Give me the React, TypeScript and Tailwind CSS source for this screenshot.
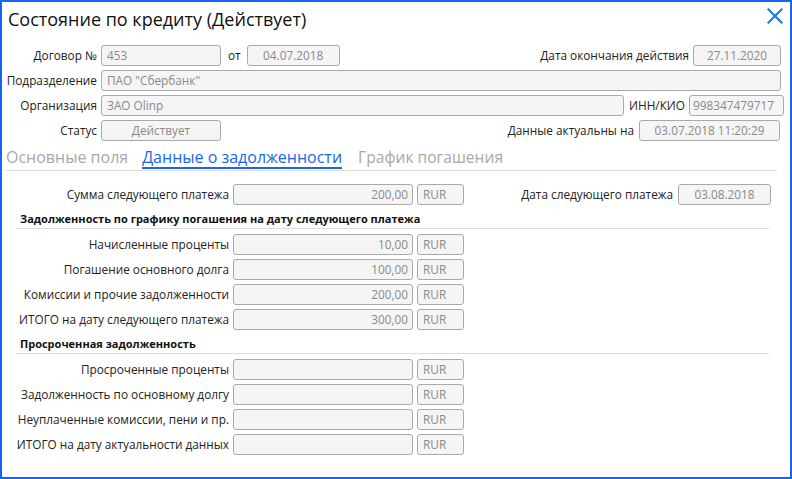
import React from 'react';

const font = { fontFamily: '"Open Sans", "Noto Sans", sans-serif' };

const Field: React.FC<{ value?: string; className?: string; align?: 'left' | 'center' | 'right' }> = ({
  value = '',
  className = '',
  align = 'left',
}) => {
  const alignCls = align === 'center' ? 'justify-center' : align === 'right' ? 'justify-end pr-[4px]' : 'justify-start pl-[5px]';
  return (
    <div
      className={`h-[21px] flex items-center rounded-[3px] border border-[#a9a9a9] bg-[#f5f5f5] text-[11.8px] text-[#8a8a8a] whitespace-nowrap overflow-hidden ${alignCls} ${className}`}
    >
      {value}
    </div>
  );
};

const Label: React.FC<{ children: React.ReactNode; className?: string }> = ({ children, className = '' }) => (
  <div className={`text-[11.8px] text-[#222] text-right whitespace-nowrap ${className}`}>{children}</div>
);

const AmountRow: React.FC<{ label: string; value?: string }> = ({ label, value }) => (
  <div className="flex items-center h-[21px]">
    <Label className="w-[227px]">{label}</Label>
    <Field value={value} align="right" className="ml-[4px] w-[180px]" />
    <Field value="RUR" className="ml-[4px] w-[47px]" />
  </div>
);

const SectionHeader: React.FC<{ title: string }> = ({ title }) => (
  <div className="mt-[7px] ml-[14px] w-[753px] border-b border-[#dcdcdc] pl-[4px] pb-[2px]">
    <div className="text-[11px] leading-[14px] font-bold text-[#111]">{title}</div>
  </div>
);

const App: React.FC = () => {
  const overdue = [
    'Просроченные проценты',
    'Задолженность по основному долгу',
    'Неуплаченные комиссии, пени и пр.',
    'ИТОГО на дату актуальности данных',
  ];

  return (
    <div style={font} className="w-[792px] h-[479px] bg-white border-2 border-[#1466f0] flex flex-col">
      {/* Title */}
      <div className="flex items-start justify-between pl-[6px] pr-[7px] pt-[5px] mb-[14px]">
        <h1 className="text-[18px] leading-[24px] text-[#111]">Состояние по кредиту (Действует)</h1>
        <svg width="16" height="16" viewBox="0 0 16 16" className="mt-[1px]">
          <path d="M1.5 1.5 L14.5 14.5 M14.5 1.5 L1.5 14.5" stroke="#1f7ae6" strokeWidth="2.2" strokeLinecap="square" />
        </svg>
      </div>

      {/* Header fields */}
      <div className="flex flex-col gap-[4px]">
        <div className="flex items-center h-[21px] pr-[9px]">
          <Label className="w-[95px]">Договор №</Label>
          <Field value="453" className="ml-[4px] w-[120px]" />
          <Label className="ml-[7px]">от</Label>
          <Field value="04.07.2018" align="center" className="ml-[6px] w-[93px]" />
          <div className="flex-1" />
          <Label>Дата окончания действия</Label>
          <Field value="27.11.2020" align="center" className="ml-[4px] w-[88px]" />
        </div>
        <div className="flex items-center h-[21px] pr-[9px]">
          <Label className="w-[95px]">Подразделение</Label>
          <Field value='ПАО "Сбербанк"' className="ml-[4px] flex-1" />
        </div>
        <div className="flex items-center h-[21px] pr-[6px]">
          <Label className="w-[95px]">Организация</Label>
          <Field value="ЗАО Olinp" className="ml-[4px] flex-1" />
          <Label className="ml-[5px]">ИНН/КИО</Label>
          <Field value="998347479717" className="ml-[4px] w-[95px] !pl-[3px]" />
        </div>
        <div className="flex items-center h-[21px] pr-[10px]">
          <Label className="w-[95px]">Статус</Label>
          <Field value="Действует" align="center" className="ml-[4px] w-[120px]" />
          <div className="flex-1" />
          <Label>Данные актуальны на</Label>
          <Field value="03.07.2018 11:20:29" align="center" className="ml-[5px] w-[141px]" />
        </div>
      </div>

      {/* Tabs */}
      <div className="mt-[6px] ml-[4px] mr-[13px] h-[24px] flex items-start gap-[14px] border-b border-[#dcdcdc] text-[16px] leading-[20px]">
        <div className="text-[#a8a8a8]">Основные поля</div>
        <div className="text-[#1a66e8] border-b-2 border-[#1a66e8]">Данные о задолженности</div>
        <div className="text-[#a8a8a8] text-[15.6px] ml-[2px]">График погашения</div>
      </div>

      {/* Next payment */}
      <div className="mt-[13px] flex items-center h-[21px] pr-[19px]">
        <AmountRow label="Сумма следующего платежа" value="200,00" />
        <div className="flex-1" />
        <Label>Дата следующего платежа</Label>
        <Field value="03.08.2018" align="center" className="ml-[5px] w-[93px]" />
      </div>

      <SectionHeader title="Задолженность по графику погашения на дату следующего платежа" />
      <div className="mt-[5px] flex flex-col gap-[4px]">
        <AmountRow label="Начисленные проценты" value="10,00" />
        <AmountRow label="Погашение основного долга" value="100,00" />
        <AmountRow label="Комиссии и прочие задолженности" value="200,00" />
        <AmountRow label="ИТОГО на дату следующего платежа" value="300,00" />
      </div>

      <SectionHeader title="Просроченная задолженность" />
      <div className="mt-[5px] flex flex-col gap-[4px]">
        {overdue.map((label) => (
          <AmountRow key={label} label={label} />
        ))}
      </div>
    </div>
  );
};

export default App;
